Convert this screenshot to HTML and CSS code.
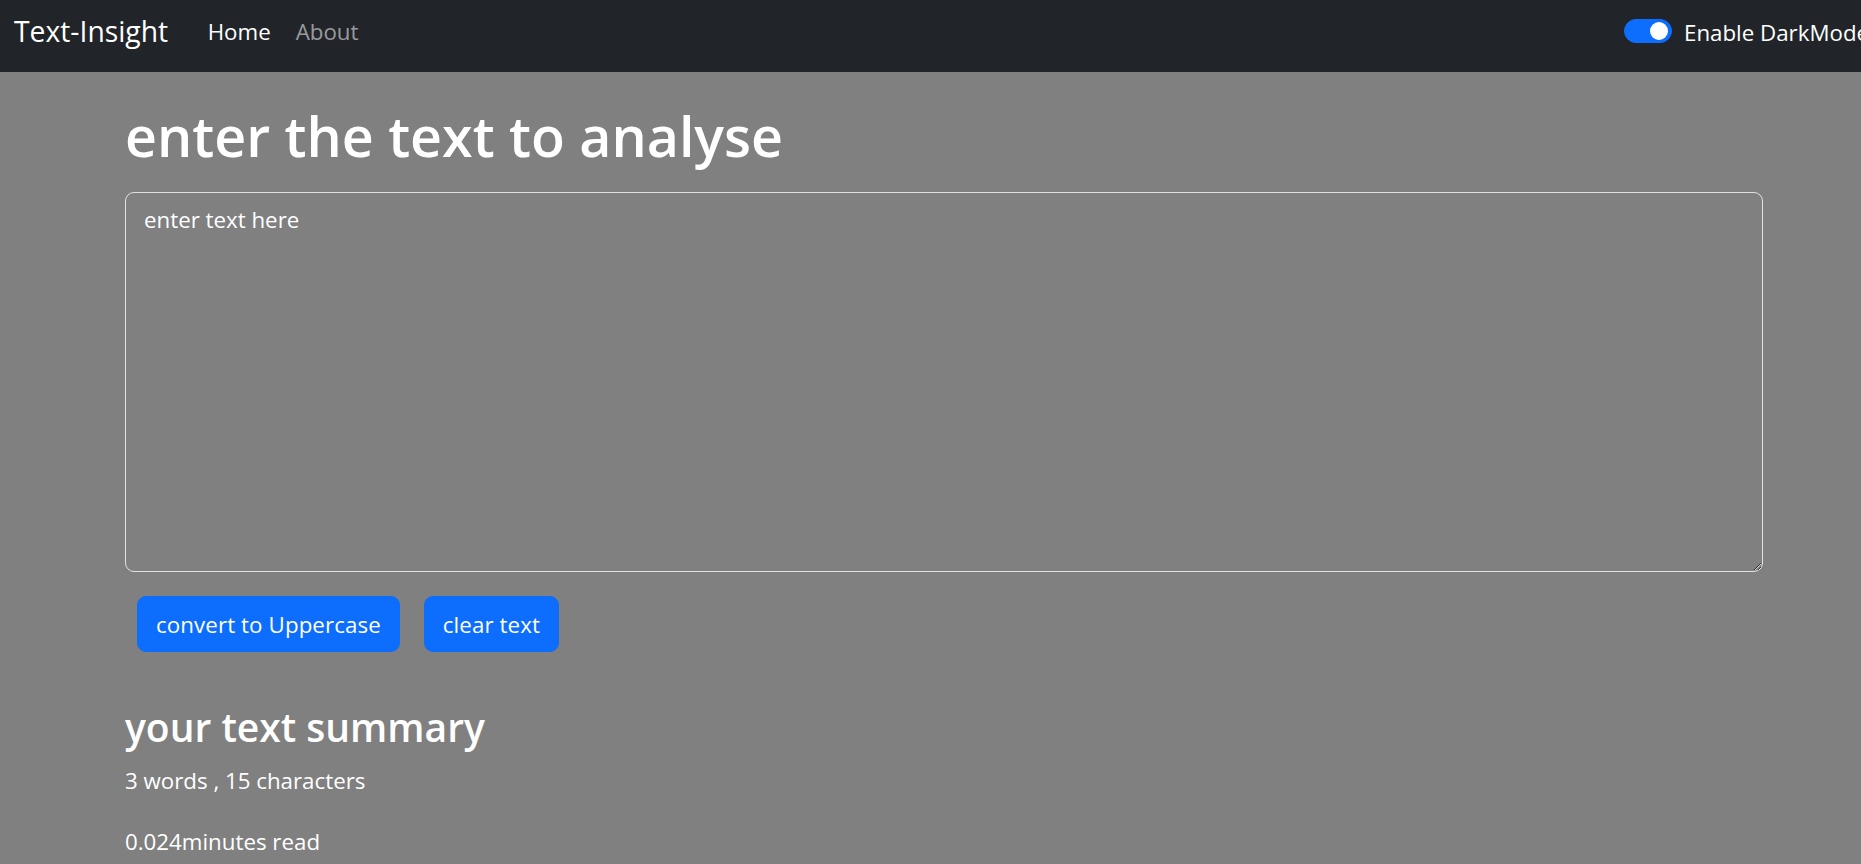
FILE: index.html
```html
<!DOCTYPE html>
<html lang="en">
<head>
<meta charset="utf-8">
<title>Text-Insight</title>
<link rel="stylesheet" href="styles.css">
</head>
<body>
<nav class="navbar">
  <a class="brand" href="#">Text-Insight</a>
  <ul class="nav-links">
    <li><a class="nav-link active" href="#">Home</a></li>
    <li><a class="nav-link" href="#">About</a></li>
  </ul>
  <label class="dark-toggle">
    <span class="switch"><span class="knob"></span></span>
    <span class="toggle-label">Enable DarkMode</span>
  </label>
</nav>

<main class="main">
  <section class="editor">
    <h1 class="title">enter the text to analyse</h1>
    <textarea class="text-box" rows="8">enter text here</textarea>
    <div class="actions">
      <button class="btn">convert to Uppercase</button>
      <button class="btn">clear text</button>
    </div>
  </section>

  <section class="summary">
    <h3 class="summary-title">your text summary</h3>
    <p class="stat">3 words , 15 characters</p>
    <p class="stat">0.024minutes read</p>
  </section>
</main>
</body>
</html>
```
FILE: styles.css
```css
html, body {
  margin: 0;
  padding: 0;
  overflow: hidden;
}

body {
  background: #808080;
  color: #fff;
  font-family: "Open Sans", "Noto Sans", sans-serif;
  font-size: 22.3px;
  line-height: 36px;
}

/* ---------- navbar ---------- */
.navbar {
  height: 72px;
  box-sizing: border-box;
  background: #212529;
  display: flex;
  align-items: flex-start;
  padding-left: 14px;
}

.brand {
  color: #fff;
  text-decoration: none;
  font-size: 28.3px;
  line-height: 45px;
  margin-top: 9px;
  margin-right: 27px;
  white-space: nowrap;
}

.nav-links {
  list-style: none;
  margin: 14px 0 0;
  padding: 0;
  display: flex;
}

.nav-link {
  display: block;
  padding: 0 12.5px;
  color: rgba(255, 255, 255, 0.55);
  text-decoration: none;
  line-height: 36px;
}

.nav-link.active {
  color: #fff;
}

.dark-toggle {
  margin-left: auto;
  margin-top: 11px;
  width: 237px;
  flex-shrink: 0;
  display: flex;
  align-items: center;
  gap: 12px;
  white-space: nowrap;
}

.switch {
  width: 48px;
  height: 24px;
  box-sizing: border-box;
  flex-shrink: 0;
  border: 1px solid #0d6efd;
  border-radius: 12px;
  background: #0d6efd;
  display: flex;
  align-items: center;
  justify-content: flex-end;
  padding-right: 3px;
}

.knob {
  width: 18px;
  height: 18px;
  border-radius: 50%;
  background: #fff;
}

.toggle-label {
  color: #fff;
  line-height: 36px;
  padding-top: 4px;
}

/* ---------- main ---------- */
.main {
  margin-left: 125px;
  width: 1638px;
  padding-top: 28px;
}

.title {
  margin: 0 0 20px;
  font-size: 55.5px;
  line-height: 72px;
  font-weight: 600;
}

.text-box {
  display: block;
  width: 100%;
  height: 380px;
  box-sizing: border-box;
  margin: 0 0 24px;
  padding: 9px 18px;
  border: 1px solid #dee2e6;
  border-radius: 9px;
  background: #808080;
  color: #fff;
  font-family: inherit;
  font-size: 22.3px;
  line-height: 36px;
  outline: none;
}

.actions {
  display: flex;
  gap: 24px;
  padding-left: 12px;
}

.btn {
  height: 56px;
  box-sizing: border-box;
  padding: 10px 18px 8px;
  border: 1px solid #0d6efd;
  border-radius: 9px;
  background: #0d6efd;
  color: #fff;
  font-family: inherit;
  font-size: 22.3px;
  line-height: 36px;
  letter-spacing: 0.1px;
  cursor: pointer;
}

.summary {
  margin-top: 50px;
}

.summary-title {
  margin: 0 0 11px;
  font-size: 39px;
  line-height: 50px;
  font-weight: 600;
}

.stat {
  margin: 0 0 25px;
}
```
